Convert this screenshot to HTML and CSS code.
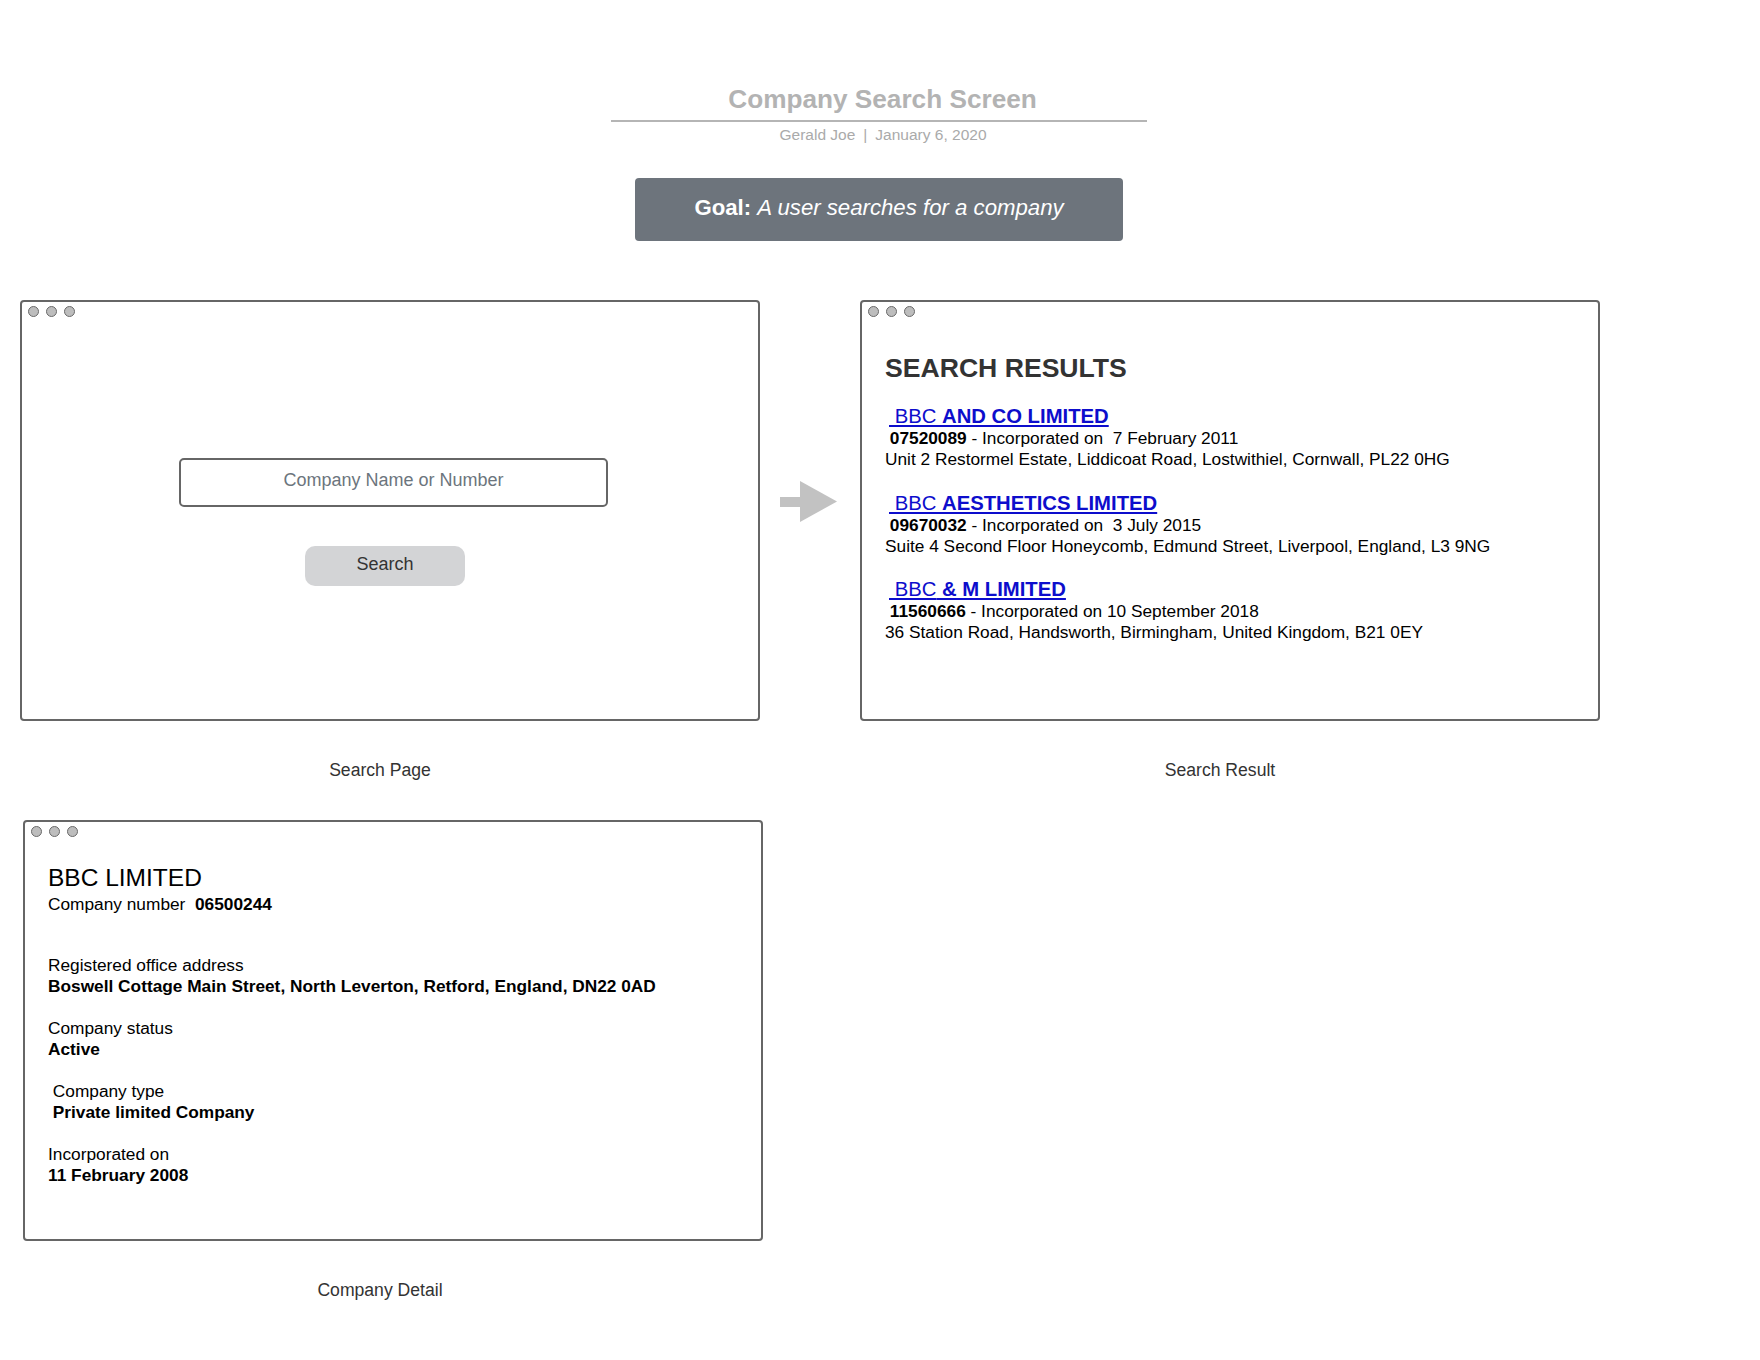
FILE: index.html
```html
<!DOCTYPE html>
<html lang="en">
<head>
<meta charset="utf-8">
<title>Company Search Screen</title>
<link rel="stylesheet" href="styles.css">
</head>
<body>
<div class="page">
  <header class="header">
    <h1 class="title">Company Search Screen</h1>
    <div class="byline"><span>Gerald Joe</span><span class="sep">|</span><span>January 6, 2020</span></div>
  </header>

  <div class="goal"><b>Goal:</b>&nbsp;<i>A user searches for a company</i></div>

  <div class="board">
    <div class="row">
      <section class="panel">
        <div class="window">
          <div class="dots"><span class="dot"></span><span class="dot"></span><span class="dot"></span></div>
          <div class="search-body">
            <input class="search-input" type="text" placeholder="Company Name or Number">
            <button class="search-btn" type="button">Search</button>
          </div>
        </div>
        <div class="caption">Search Page</div>
      </section>

      <div class="arrow">
        <svg width="57" height="41" viewBox="0 0 57 41" aria-hidden="true">
          <rect x="0" y="16" width="21" height="10" fill="#c2c2c2"/>
          <polygon points="20,0 57,20.5 20,41" fill="#c2c2c2"/>
        </svg>
      </div>

      <section class="panel">
        <div class="window">
          <div class="dots"><span class="dot"></span><span class="dot"></span><span class="dot"></span></div>
          <div class="results">
            <h2 class="results-title">SEARCH RESULTS</h2>
            <div class="result">
              <a class="result-link" href="#">&nbsp;BBC <b>AND CO LIMITED</b></a>
              <div class="meta">&nbsp;<b>07520089</b> - Incorporated on &nbsp;7 February 2011</div>
              <div class="meta">Unit 2 Restormel Estate, Liddicoat Road, Lostwithiel, Cornwall, PL22 0HG</div>
            </div>
            <div class="result">
              <a class="result-link" href="#">&nbsp;BBC <b>AESTHETICS LIMITED</b></a>
              <div class="meta">&nbsp;<b>09670032</b> - Incorporated on &nbsp;3 July 2015</div>
              <div class="meta">Suite 4 Second Floor Honeycomb, Edmund Street, Liverpool, England, L3 9NG</div>
            </div>
            <div class="result">
              <a class="result-link" href="#">&nbsp;BBC<b> &amp; M LIMITED</b></a>
              <div class="meta">&nbsp;<b>11560666</b> - Incorporated on 10 September 2018</div>
              <div class="meta">36 Station Road, Handsworth, Birmingham, United Kingdom, B21 0EY</div>
            </div>
          </div>
        </div>
        <div class="caption">Search Result</div>
      </section>
    </div>

    <div class="row row-second">
      <section class="panel">
        <div class="window">
          <div class="dots"><span class="dot"></span><span class="dot"></span><span class="dot"></span></div>
          <div class="detail">
            <h2 class="detail-name">BBC LIMITED</h2>
            <div class="line">Company number &nbsp;<b>06500244</b></div>
            <div class="group group-first">
              <div class="line">Registered office address</div>
              <div class="line"><b>Boswell Cottage Main Street, North Leverton, Retford, England, DN22 0AD</b></div>
            </div>
            <div class="group">
              <div class="line">Company status</div>
              <div class="line"><b>Active</b></div>
            </div>
            <div class="group">
              <div class="line">&nbsp;Company type</div>
              <div class="line">&nbsp;<b>Private limited Company</b></div>
            </div>
            <div class="group">
              <div class="line">Incorporated on</div>
              <div class="line"><b>11 February 2008</b></div>
            </div>
          </div>
        </div>
        <div class="caption caption-detail">Company Detail</div>
      </section>
    </div>
  </div>
</div>
</body>
</html>
```

FILE: styles.css
```css
* { box-sizing: border-box; }

html, body {
  margin: 0;
  padding: 0;
  background: #ffffff;
}

body {
  font-family: "Liberation Sans", Arial, sans-serif;
  color: #000;
}

.page {
  width: 1760px;
  min-height: 1360px;
  padding-top: 84px;
}

.header {
  width: 536px;
  margin: 0 auto 0 611px;
  text-align: center;
}

.title {
  margin: 0;
  font-size: 26.2px;
  line-height: 30px;
  font-weight: bold;
  color: #b3b3b3;
  padding: 0 0 6px 7px;
  border-bottom: 2px solid #b5b5b5;
}

.byline {
  margin-top: 4px;
  padding-left: 8px;
  font-size: 15.5px;
  line-height: 18px;
  color: #aaaaaa;
}

.byline .sep {
  margin: 0 8px;
}

.goal {
  width: 488px;
  height: 63px;
  margin: 34px 0 0 635px;
  background: #6d747c;
  border-radius: 4px;
  color: #ffffff;
  font-size: 22.2px;
  display: flex;
  align-items: center;
  justify-content: center;
  padding-bottom: 4px;
}

.goal b { font-weight: bold; }

.board {
  margin-top: 59px;
  padding-left: 20px;
}

.row {
  display: flex;
  align-items: flex-start;
}

.row-second {
  margin-top: 40px;
  padding-left: 3px;
}

.panel {
  width: 740px;
  display: flex;
  flex-direction: column;
}

.window {
  width: 740px;
  height: 421px;
  border: 2px solid #666666;
  border-radius: 4px;
  background: #fff;
  display: flex;
  flex-direction: column;
}

.dots {
  display: flex;
  gap: 7px;
  padding: 4px 0 0 6px;
  height: 15px;
}

.dot {
  width: 11px;
  height: 11px;
  border-radius: 50%;
  background: #bdbdbd;
  border: 1.5px solid #6a6a6a;
}

.caption {
  margin-top: 39px;
  padding-right: 20px;
  text-align: center;
  font-size: 17.6px;
  line-height: 20px;
  color: #333333;
}

.caption-detail {
  padding-right: 26px;
}

/* Search page */
.search-body {
  display: flex;
  flex-direction: column;
  align-items: flex-start;
  padding-top: 141px;
}

.search-input {
  margin-left: 157px;
  width: 429px;
  height: 49px;
  border: 2px solid #666666;
  border-radius: 5px;
  font-family: "Liberation Sans", Arial, sans-serif;
  font-size: 18px;
  text-align: center;
  color: #333;
  background: #fff;
  outline: none;
  padding: 0 10px 5px;
}

.search-input::placeholder {
  color: #6c757d;
  opacity: 1;
}

.search-btn {
  margin: 39px 0 0 283px;
  width: 160px;
  height: 40px;
  border: none;
  border-radius: 10px;
  background: #d3d4d6;
  color: #333333;
  font-family: "Liberation Sans", Arial, sans-serif;
  font-size: 18px;
  padding: 0 0 4px;
}

/* Arrow */
.arrow {
  width: 100px;
  padding: 181px 0 0 20px;
  display: flex;
}

/* Results */
.results {
  padding: 36px 0 0 23px;
}

.results-title {
  margin: 0 0 21px;
  font-size: 26.6px;
  line-height: 30px;
  font-weight: bold;
  color: #333333;
}

.result {
  margin-bottom: 20.6px;
}

.result-link {
  display: inline-block;
  font-size: 20.3px;
  line-height: 24px;
  color: #0d0dcc;
  text-decoration: underline;
  margin-left: 4px;
}

.meta {
  font-size: 17.3px;
  line-height: 21px;
  color: #000;
}

/* Detail */
.detail {
  padding: 26px 0 0 23px;
}

.detail-name {
  margin: 0 0 1px;
  font-size: 24.5px;
  line-height: 30px;
  font-weight: normal;
  color: #000;
}

.line {
  font-size: 17.3px;
  line-height: 21px;
}

.group {
  margin-top: 21px;
}

.group-first {
  margin-top: 40px;
}
```
